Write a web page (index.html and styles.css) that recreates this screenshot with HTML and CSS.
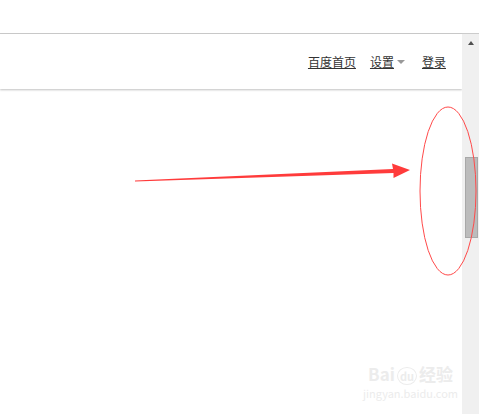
FILE: index.html
```html
<!DOCTYPE html>
<html>
<head>
    <title>百度一下</title>
    <meta charset="UTF-8">
    <link rel="stylesheet" href="styles.css">
</head>
<body>
    <div class="topbar"></div>
    <div class="window">
        <div class="page">
            <div class="header">
                <a href="#" class="nav-link">百度首页</a>
                <a href="#" class="nav-link setting">设置<span class="caret"></span></a>
                <a href="#" class="nav-link">登录</a>
            </div>
        </div>
        <div class="scrollbar">
            <div class="scroll-up"></div>
            <div class="thumb"></div>
        </div>
    </div>

    <!-- 标注：箭头和椭圆 -->
    <svg class="marks" width="479" height="414" viewBox="0 0 479 414">
        <polygon points="135,180.5 393,169 392,163.5 410,170 393.5,178 393.5,173 135,181.5" fill="#ff3b3b"/>
        <ellipse cx="448" cy="191" rx="28" ry="84" fill="none" stroke="#ff4a4a" stroke-width="1"/>
    </svg>

    <div class="watermark">
        <div class="wm-logo">Bai<span class="wm-du">du</span>经验</div>
        <div class="wm-url">jingyan.baidu.com</div>
    </div>
</body>
</html>
```

FILE: styles.css
```css
body { margin: 0; font-family: "Noto Sans CJK SC", "Liberation Sans", sans-serif; background: #fff; overflow: hidden; }
.topbar { height: 33px; background: #fff; }
.window { display: flex; border-top: 1px solid #ccc; height: 380px; }
.page { flex: 1; }
.header { height: 55px; display: flex; justify-content: flex-end; align-items: center; padding-right: 16px; box-shadow: 0 1px 2px rgba(0, 0, 0, 0.25); }
.nav-link { color: #333; font-size: 12px; line-height: 14px; text-decoration: underline; margin-left: 14px; display: flex; align-items: center; }
.setting { margin-right: 3px; }
.caret { width: 0; height: 0; border-left: 4px solid transparent; border-right: 4px solid transparent; border-top: 4px solid #999; margin-left: 3px; }
.scrollbar { width: 17px; background: #f0f0f0; display: flex; flex-direction: column; align-items: center; }
.scroll-up { width: 0; height: 0; border-left: 3.5px solid transparent; border-right: 3.5px solid transparent; border-bottom: 4px solid #505050; margin-top: 7px; }
.thumb { width: 13px; height: 81px; background: #bcbcbc; border: 1px solid #a8a8a8; box-sizing: border-box; margin-top: 112px; margin-left: 1px; }
.marks { position: absolute; left: 0; top: 0; pointer-events: none; }
.watermark { position: absolute; left: 363px; top: 364px; color: #ececec; text-align: center; }
.wm-logo { font-size: 17px; font-weight: bold; line-height: 20px; }
.wm-du { font-size: 11px; border: 1px solid #ececec; border-radius: 50%; padding: 0 2px; margin: 0 2px; }
.wm-url { font-size: 11px; line-height: 14px; }
```
